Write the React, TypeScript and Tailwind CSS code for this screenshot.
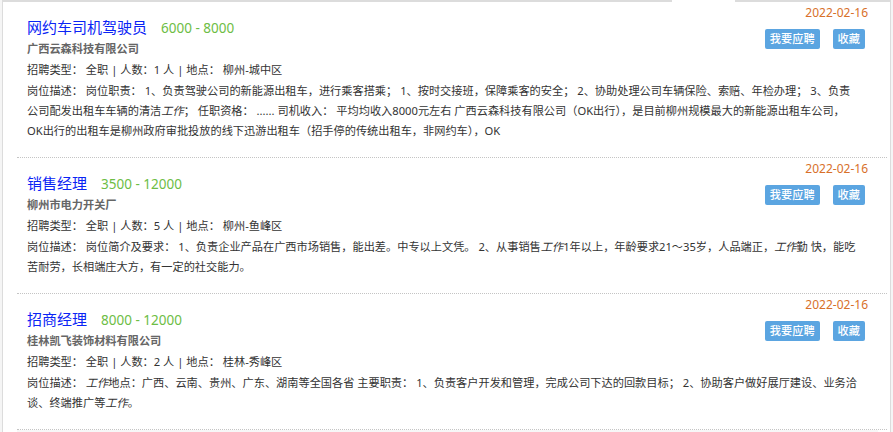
import type { ReactNode } from 'react';

type Job = {
  title: string;
  salary: string;
  company: string;
  count: number;
  place: string;
  date: string;
  desc: string[];
};

const jobs: Job[] = [
  {
    title: '网约车司机驾驶员',
    salary: '6000 - 8000',
    company: '广西云森科技有限公司',
    count: 1,
    place: '柳州-城中区',
    date: '2022-02-16',
    desc: [
      '岗位描述： 岗位职责： 1、负责驾驶公司的新能源出租车，进行乘客搭乘； 1、按时交接班，保障乘客的安全； 2、协助处理公司车辆保险、索赔、年检办理； 3、负责',
      '公司配发出租车车辆的清洁工作； 任职资格： ...... 司机收入： 平均均收入8000元左右 广西云森科技有限公司（OK出行），是目前柳州规模最大的新能源出租车公司，',
      'OK出行的出租车是柳州政府审批投放的线下迅游出租车（招手停的传统出租车，非网约车），OK',
    ],
  },
  {
    title: '销售经理',
    salary: '3500 - 12000',
    company: '柳州市电力开关厂',
    count: 5,
    place: '柳州-鱼峰区',
    date: '2022-02-16',
    desc: [
      '岗位描述： 岗位简介及要求： 1、负责企业产品在广西市场销售，能出差。中专以上文凭。 2、从事销售工作1年以上，年龄要求21～35岁，人品端正，工作勤 快，能吃',
      '苦耐劳，长相端庄大方，有一定的社交能力。',
    ],
  },
  {
    title: '招商经理',
    salary: '8000 - 12000',
    company: '桂林凯飞装饰材料有限公司',
    count: 2,
    place: '桂林-秀峰区',
    date: '2022-02-16',
    desc: [
      '岗位描述： 工作地点：广西、云南、贵州、广东、湖南等全国各省 主要职责： 1、负责客户开发和管理，完成公司下达的回款目标； 2、协助客户做好展厅建设、业务洽',
      '谈、终端推广等工作。',
    ],
  },
];

// "工作" shows up slanted in the original listing
function withItalic(text: string): ReactNode[] {
  const parts = text.split('工作');
  return parts.flatMap((part, i) =>
    i === 0 ? [part] : [<i key={i}>工作</i>, part]
  );
}

function JobItem({ job }: { job: Job }) {
  return (
    <div className="flow-root border-b border-dotted border-[#c4c4c4] pl-[10px] pr-[19px] pt-[4px] pb-[16px]">
      {/* date + actions */}
      <div className="float-right flex flex-col items-end">
        <div className="text-[12px] leading-[14px] text-[#d8702a]">{job.date}</div>
        <div className="mt-[9px] mr-[3px] flex gap-[13px]">
          <button className="h-[20px] rounded-[2px] bg-[#5ba5e1] px-[5px] text-[11.2px] leading-[20px] font-medium text-white">
            我要应聘
          </button>
          <button className="h-[20px] rounded-[2px] bg-[#5ba5e1] px-[5px] text-[11.2px] leading-[20px] font-medium text-white">
            收藏
          </button>
        </div>
      </div>

      <div className="mt-[11px] flex items-baseline gap-[14px] leading-[20px]">
        <span className="text-[15px] text-[#0a24f5]">{job.title}</span>
        <span className="text-[13.5px] text-[#6dbd45]">{job.salary}</span>
      </div>
      <div className="text-[11.2px] leading-[21px] font-bold text-[#666]">{job.company}</div>
      <div className="text-[11.2px] leading-[21px]">
        招聘类型： 全职 | 人数：{job.count} 人 | 地点： {job.place}
      </div>
      <div className="mt-[1px] text-[11.2px] leading-[20px]">
        {job.desc.map((line, i) => (
          <div key={i} className="whitespace-nowrap">
            {withItalic(line)}
          </div>
        ))}
      </div>
    </div>
  );
}

export default function App() {
  return (
    <div className="min-h-[432px] bg-[#f5f5f5] font-['Noto_Sans','Noto_Sans_CJK_SC',sans-serif] text-[#333]">
      <div className="ml-[2px] min-h-[432px] w-[889px] border-x border-[#dcdcdc] bg-white">
        {/* top border, broken under the active tab */}
        <div className="flex h-[2px]">
          <div className="flex-1 bg-[#dcdcdc]" />
          <div className="w-[63px]" />
          <div className="w-[155px] bg-[#dcdcdc]" />
        </div>

        <div className="pl-[14px] pr-[3px]">
          {jobs.map((job, index) => (
            <JobItem key={index} job={job} />
          ))}
          <div className="mr-[9px] h-[12px] bg-[#f7f7f7]" />
        </div>
      </div>
    </div>
  );
}
